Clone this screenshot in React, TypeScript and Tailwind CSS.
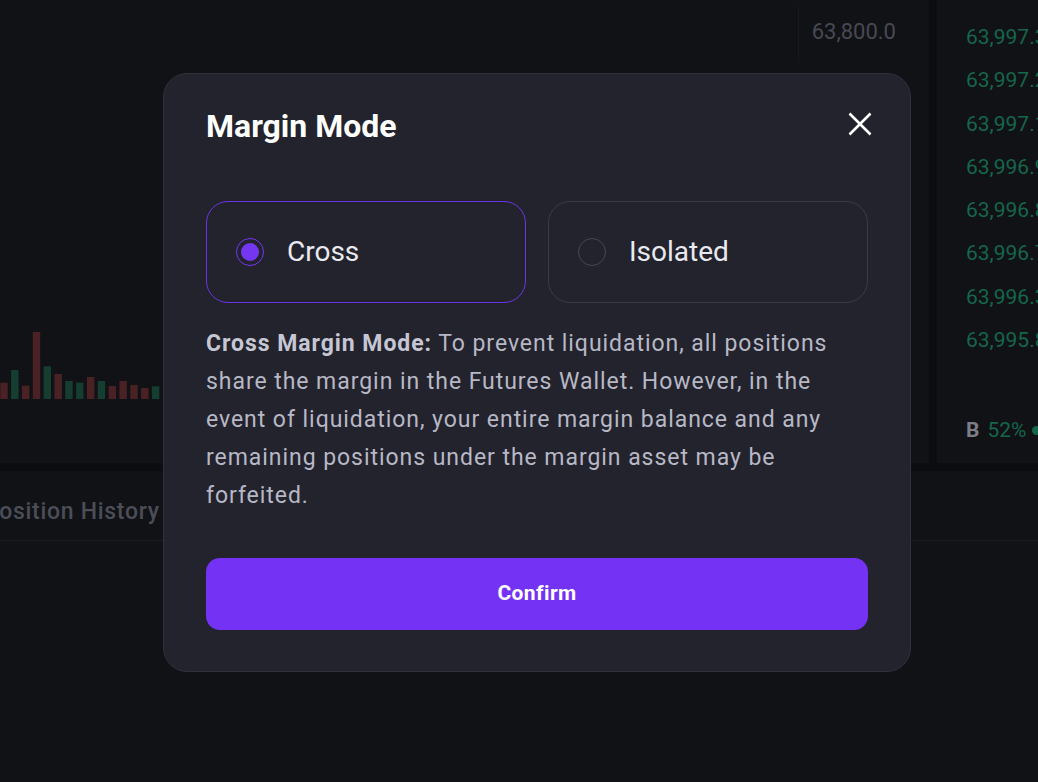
const bars: [number, number, "r" | "g"][] = [
  [382.7, 0, "r"],
  [370, 1, "g"],
  [385.7, 2, "r"],
  [332, 3, "r"],
  [366.3, 4, "g"],
  [374, 5, "r"],
  [381, 6, "g"],
  [382.7, 7, "g"],
  [377, 8, "r"],
  [381, 9, "g"],
  [386, 10, "r"],
  [381, 11, "r"],
  [385, 12, "r"],
  [388, 13, "r"],
  [386.3, 14, "g"],
];

const asks = [
  "63,997.3",
  "63,997.2",
  "63,997.1",
  "63,996.9",
  "63,996.8",
  "63,996.7",
  "63,996.3",
  "63,995.8",
];

const App = () => {
  return (
    <div className="relative h-[782px] w-[1038px] overflow-hidden bg-[#111216] font-['Roboto',sans-serif]">
      {/* Top: chart + order book */}
      <div className="flex h-[463px]">
        {/* Chart */}
        <div className="flex w-[929px] flex-col">
          <div className="ml-[798px] mt-[7px] h-[55px] border-l border-dotted border-[#1e2025] pr-[33px] pt-[12px] text-right text-[22px] leading-[26px] text-[#474952]">
            63,800.0
          </div>
          <svg className="mt-[258px]" width="929" height="80" viewBox="0 0 929 80">
            {bars.map(([top, i, c]) => (
              <rect
                key={i}
                x={0.3 + i * 10.83}
                y={top - 320}
                width={7.4}
                height={399 - top}
                fill={c === "r" ? "#4a2125" : "#153e31"}
              />
            ))}
          </svg>
        </div>
        <div className="w-[8px] bg-[#0c0d10]"></div>
        {/* Order book */}
        <div className="flex-1 overflow-hidden whitespace-nowrap pl-[29px] pt-[16px]">
          {asks.map((p) => (
            <div key={p} className="text-[21px] leading-[43.3px] text-[#15664a]">
              {p}
            </div>
          ))}
          <div className="mt-[55px] flex items-center text-[21px] leading-[26px]">
            <span className="font-bold text-[#7d7e88]">B</span>
            <span className="ml-[8px] text-[#15664a]">52%</span>
            <span className="ml-[6px] h-[9px] w-[9px] shrink-0 rounded-full bg-[#15664a]"></span>
          </div>
        </div>
      </div>
      <div className="h-[8px] bg-[#0c0d10]"></div>

      {/* Bottom tabs */}
      <div className="flex h-[70px] border-b border-[#1a1d21] pt-[27px]">
        <div className="-ml-[16px] text-[23px] font-medium leading-[28px] tracking-[0.7px] text-[#4b4d57]">
          Position History
        </div>
      </div>

      {/* Modal */}
      <div className="absolute left-[163px] top-[73px] h-[599px] w-[748px] rounded-[24px] border border-[#2f303a] bg-[#23232d] px-[42px] pt-[32px]">
        <div className="flex h-[40px] items-start justify-between">
          <h2 className="text-[32px] font-bold leading-[40px] text-white">Margin Mode</h2>
          <button className="-mr-[4px] mt-[6px]">
            <svg width="24" height="24" viewBox="0 0 24 24" fill="none" stroke="#ffffff" strokeWidth="2.6">
              <path d="M1.5 1.5L22.5 22.5M22.5 1.5L1.5 22.5" />
            </svg>
          </button>
        </div>

        <div className="mt-[55px] grid grid-cols-2 gap-[22px]">
          <div className="flex h-[102px] items-center gap-[23px] rounded-[22px] border border-[#6c34e6] pl-[29px]">
            <div className="flex h-7 w-7 items-center justify-center rounded-full border border-[#7436f0]">
              <div className="h-[18px] w-[18px] rounded-full bg-[#7436f0]"></div>
            </div>
            <span className="text-[28px] leading-[34px] text-[#e9e9f0]">Cross</span>
          </div>
          <div className="flex h-[102px] items-center gap-[23px] rounded-[22px] border border-[#3a3b45] pl-[29px]">
            <div className="h-7 w-7 rounded-full border border-[#474852]"></div>
            <span className="text-[28px] leading-[34px] text-[#e9e9f0]">Isolated</span>
          </div>
        </div>

        <p className="mt-[22px] text-[23px] leading-[38px] tracking-[0.95px] text-[#b7b8c6]">
          <span className="font-bold text-[#c6c7d4]">Cross Margin Mode:</span> To prevent liquidation, all
          positions share the margin in the Futures Wallet. However, in the event of liquidation, your entire
          margin balance and any remaining positions under the margin asset may be forfeited.
        </p>

        <button className="mt-[43px] flex h-[72px] w-full items-center justify-center rounded-[14px] bg-[#7432f4] text-[21px] font-bold tracking-[0.4px] text-white">
          Confirm
        </button>
      </div>
    </div>
  );
};

export default App;
